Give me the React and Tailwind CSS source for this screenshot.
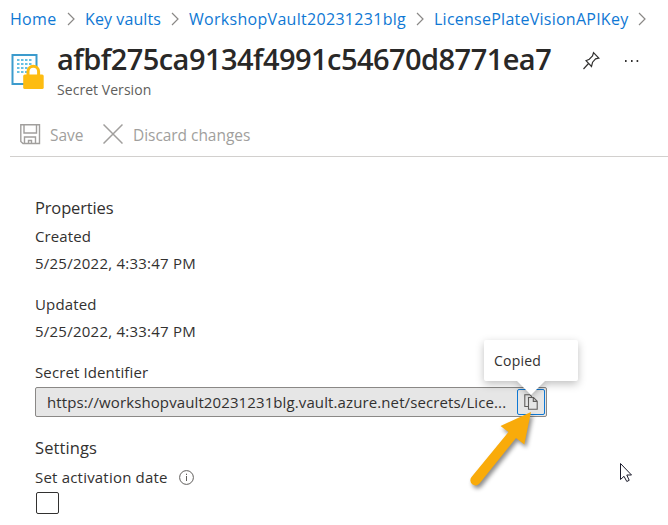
import React from "react";

function Chevron({ className }) {
  return (
    <svg className={className} width="8" height="14" viewBox="0 0 8 14" fill="none" stroke="#8a8886" strokeWidth="1.2">
      <path d="M1 1 L7 7 L1 13" />
    </svg>
  );
}

function Breadcrumb() {
  return (
    <nav className="flex h-[38px] items-center pl-[10px] text-[16px] text-[#0f78d4]">
      <a className="w-[57px] tracking-[0.3px]">Home</a>
      <Chevron className="mr-[10px]" />
      <a className="w-[86px] tracking-[0.1px]">Key vaults</a>
      <Chevron className="mr-[10px]" />
      <a className="w-[227px] tracking-[0.3px]">WorkshopVault20231231blg</a>
      <Chevron className="mr-[10px]" />
      <a className="w-[204px] tracking-[0.25px]">LicensePlateVisionAPIKey</a>
      <Chevron />
    </nav>
  );
}

function VaultIcon() {
  return (
    <svg width="36" height="38" viewBox="0 0 36 38" className="mt-[15px] shrink-0">
      <rect x="2.5" y="2" width="24" height="29" fill="#fff" stroke="#3c9bcd" strokeWidth="2" />
      <g fill="#66c0e4">
        {[6, 10, 14, 18].map((y) =>
          [7, 11, 15, 19].map((x) => <rect key={`${x}-${y}`} x={x} y={y} width="2.5" height="2" />)
        )}
      </g>
      <path d="M18 23 V18.5 a5.3 5.3 0 0 1 10.6 0 V23" fill="#fff" stroke="#fdbc11" strokeWidth="3" />
      <rect x="13.2" y="21.5" width="20.5" height="14.5" rx="1.6" fill="#fdbc11" />
    </svg>
  );
}

function Header() {
  return (
    <header className="flex h-[70px] pl-[10px]">
      <VaultIcon />
      <div className="ml-[11px] w-[525px] shrink-0">
        <h1 className="h-[43px] whitespace-nowrap text-[29px] leading-[42px] font-semibold tracking-[-0.55px] text-[#292827]">
          afbf275ca9134f4991c54670d8771ea7
        </h1>
        <p className="text-[14px] leading-[18px] tracking-[0.05px] text-[#605e5c]">Secret Version</p>
      </div>
      <svg className="mt-[13px] shrink-0" width="18" height="20" viewBox="0 0 18 20" fill="none" stroke="#323130" strokeWidth="1.2">
        <path d="M1.5 18 L6.5 12.5 M4 9.6 L9.5 15.5 L10.6 11.2 L13.6 7.8 L16.8 7.2 L11.5 1.7 L10.5 4.9 L7.3 8.2 Z" />
      </svg>
      <svg className="mt-[21px] ml-[24px] shrink-0" width="16" height="4" viewBox="0 0 16 4" fill="#323130">
        <rect x="1" y="1" width="1.6" height="2" />
        <rect x="7" y="1" width="1.6" height="2" />
        <rect x="12.6" y="1" width="1.6" height="2" />
      </svg>
    </header>
  );
}

function Toolbar() {
  return (
    <div className="ml-[10px] flex h-[49px] items-center border-b border-[#d2d0ce] pt-[7px] pl-[10px] text-[15.5px] text-[#a19f9d]">
      <svg className="mb-[3px]" width="21" height="21" viewBox="0 0 21 21" fill="none" stroke="#a19f9d" strokeWidth="1.4">
        <path d="M.8 .8 H19.5 V19.5 H3 L.8 17.5 Z M4 1 V9 H16.5 V1 M4.5 19.5 V13 H15.5 V19.5 M8.5 19.5 V16.5 H11.5 V19.5" />
      </svg>
      <span className="ml-[9px] w-[53px]">Save</span>
      <svg className="mb-[3px]" width="20" height="20" viewBox="0 0 20 20" fill="none" stroke="#a19f9d" strokeWidth="1.5">
        <path d="M.5 .5 L19.5 19.5 M19.5 .5 L.5 19.5" />
      </svg>
      <span className="ml-[10px] tracking-[-0.05px]">Discard changes</span>
    </div>
  );
}

function CopyButton() {
  return (
    <button className="relative mr-px flex h-[26px] w-[28px] items-center justify-center rounded-[2px] border border-[#0f78d4] bg-[#e6e6e6]">
      <svg width="14" height="16" viewBox="0 0 14 16" fill="none" stroke="#605e5c" strokeWidth="1.1">
        <path d="M4.5 12.5 H.8 V.8 H6 L8 2.8" />
        <path d="M4.5 3.5 H9.5 L13.2 7.2 V15.2 H4.5 Z M9.3 3.7 V7.4 H13" />
      </svg>
      <div className="absolute -top-[50px] -left-[34px] h-[41px] w-[94px] rounded-[2px] bg-white pl-[10px] text-left text-[14px] leading-[41px] tracking-[0.2px] text-[#323130] shadow-[0_3px_9px_rgba(0,0,0,0.25)]">
        Copied
        <svg
          className="absolute top-[40px] left-[32px] drop-shadow-[0_2px_3px_rgba(0,0,0,0.25)] [clip-path:inset(1px_-10px_-10px_-10px)]"
          width="30"
          height="15"
          viewBox="0 0 30 15"
        >
          <path d="M0 0 H30 L15 15 Z" fill="#fff" />
        </svg>
      </div>
    </button>
  );
}

function Pointer() {
  return (
    <svg className="absolute top-[462px] left-[619px]" width="14" height="21" viewBox="0 0 14 21">
      <path d="M1.5 1.5 V17.5 L5 14.3 L7.8 19.5 L10.2 18.3 L7.8 13 H12.5 Z" fill="#fff" stroke="#1b1b2b" strokeWidth="1" />
    </svg>
  );
}

function Arrow() {
  return (
    <svg className="absolute top-[408px] left-[464px] drop-shadow-[2px_3px_2px_rgba(0,0,0,0.45)]" width="75" height="85" viewBox="0 0 75 85">
      <path d="M67 4 L60.3 36.5 L52 30 L15.5 75.5 A5 5 0 0 1 7.5 69 L44.5 24 L36.5 18 Z" fill="#f9ab0a" />
    </svg>
  );
}

export default function App() {
  return (
    <main className="relative h-[525px] w-[668px] overflow-hidden bg-white font-['Open_Sans','Noto_Sans',sans-serif] text-[#323130]">
      <Breadcrumb />
      <Header />
      <Toolbar />
      <section className="flex flex-col pt-[37px] pl-[35px] text-[15px] leading-[27px]">
        <h2 className="h-[29px] text-[16.5px] leading-[28px] tracking-[-0.15px]">Properties</h2>
        <div className="tracking-[0.1px]">Created</div>
        <div className="tracking-[0.24px]">5/25/2022, 4:33:47 PM</div>
        <div className="mt-[14px] tracking-[0.15px]">Updated</div>
        <div className="tracking-[0.24px]">5/25/2022, 4:33:47 PM</div>
        <div className="mt-[14px] tracking-[0.12px]">Secret Identifier</div>
        <div className="mt-px flex h-[30px] w-[512px] items-center rounded-[2px] border border-[#8a8886] bg-[#e6e6e6] pl-[11px]">
          <span className="flex-1 tracking-[0.11px] whitespace-nowrap">https://workshopvault20231231blg.vault.azure.net/secrets/Lice...</span>
          <CopyButton />
        </div>
        <h2 className="mt-[17px] text-[16.5px] leading-[28px] tracking-[0.1px]">Settings</h2>
        <div className="mt-[2px] flex items-center">
          <span className="w-[144px] tracking-[0.2px]">Set activation date</span>
          <svg width="15" height="15" viewBox="0 0 15 15" fill="none" stroke="#605e5c">
            <circle cx="7.5" cy="7.5" r="6.9" />
            <path d="M7.5 6 V11 M7.5 3.7 V5" />
          </svg>
        </div>
        <div className="mt-px ml-px h-[22px] w-[23px] rounded-[2px] border border-[#323130]" />
      </section>
      <Arrow />
      <Pointer />
    </main>
  );
}
